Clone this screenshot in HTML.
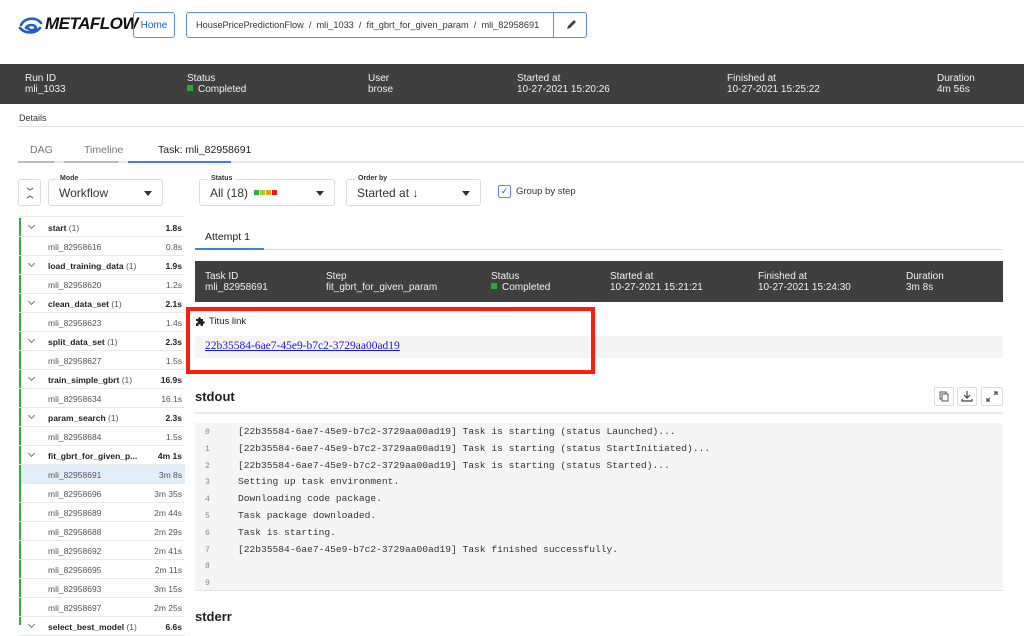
<!DOCTYPE html>
<html><head><meta charset="utf-8"><style>
*{box-sizing:border-box;margin:0;padding:0}
body{width:1024px;height:624px;overflow:hidden;background:#fff;font-family:"Liberation Sans",sans-serif;color:#333;position:relative;font-size:11px}
.a{position:absolute;white-space:nowrap}
.bar{position:absolute;background:#3f3f3f;color:#fff}
.bar .l{position:absolute;font-size:10px;line-height:11px;color:#f0f0f0}
.bar .l span{display:block;font-weight:normal}
.dot{display:inline-block;width:6px;height:6px;background:#20af2e;margin-right:5px;vertical-align:1px}
.sel{position:absolute;top:179px;height:27px;border:1px solid #ddd;border-radius:3px;background:#fff}
.sel b{position:absolute;top:-5px;left:8px;font-size:7px;background:#fff;padding:0 3px;color:#333}
.sel .v{position:absolute;left:10px;top:6px;font-size:12px;color:#333}
.sel .c{position:absolute;right:10px;top:11px;border-left:4px solid transparent;border-right:4px solid transparent;border-top:5px solid #333}
.sq{display:inline-block;width:5px;height:5px;margin-right:1px;vertical-align:2px}
.row{position:absolute;left:19px;width:166px;height:19px;border-bottom:1px solid #e8e8e8;font-size:8.5px;color:#555}
.row .n{position:absolute;left:29px;top:5px}
.row .t{position:absolute;right:3px;top:5px}
.row.h{font-weight:bold;color:#222}
.row.h .n span{font-weight:normal;color:#555}
.row.h:before{content:"";position:absolute;left:10px;top:5px;width:4px;height:4px;border-right:1px solid #777;border-bottom:1px solid #777;transform:rotate(45deg)}
.g{position:absolute;left:19px;width:2px;background:#2bb03f}
.log{position:absolute;font-family:"Liberation Mono",monospace;font-size:9.6px;color:#333}
.ib{position:absolute;top:387px;width:20px;height:19px;border:1px solid #ddd;border-radius:2px;background:#fff}
</style></head><body>
<svg class="a" style="left:18px;top:15px" width="26" height="20" viewBox="0 0 26 20"><path d="M3 10c4-8 16-8 20-2M2 13c5 6 15 6 20 0M8 13c2-4 9-4 10 0c-2 3-7 3-9-1" fill="none" stroke="#1a5fc8" stroke-width="2.6" stroke-linecap="round"/></svg>
<div class="a" style="left:45px;top:14px;font-size:17px;font-weight:bold;font-style:italic;color:#111;letter-spacing:-0.5px">METAFLOW</div>
<div class="a" style="left:133px;top:12px;width:42px;height:26px;border:1px solid #5b8fd9;border-radius:3px;color:#1a63c8;font-size:10px;text-align:center;padding-top:7px;line-height:11px">Home</div>
<div class="a" style="left:186px;top:12px;width:401px;height:26px;border:1px solid #5b8fd9;border-radius:3px;font-size:9.2px;line-height:11px;padding:7px 0 0 9px;color:#333">HousePricePredictionFlow &nbsp;/&nbsp; mli_1033 &nbsp;/&nbsp; fit_gbrt_for_given_param &nbsp;/&nbsp; mli_82958691</div>
<div class="a" style="left:553px;top:13px;width:33px;height:24px;background:#fff;border-left:1px solid #5b8fd9;border-radius:0 3px 3px 0"></div>
<svg class="a" style="left:566px;top:18px" width="12" height="12" viewBox="0 0 12 12"><path d="M1 11l1-3 6-6 2 2-6 6z" fill="#444"/></svg>

<div class="bar" style="left:0;top:64px;width:1024px;height:40px">
<div class="l" style="left:25px;top:9px">Run ID<span>mli_1033</span></div>
<div class="l" style="left:187px;top:9px">Status<span><i class="dot"></i>Completed</span></div>
<div class="l" style="left:368px;top:9px">User<span>brose</span></div>
<div class="l" style="left:517px;top:9px">Started at<span>10-27-2021 15:20:26</span></div>
<div class="l" style="left:727px;top:9px">Finished at<span>10-27-2021 15:25:22</span></div>
<div class="l" style="left:937px;top:9px">Duration<span>4m 56s</span></div>
</div>
<div class="a" style="left:19px;top:113px;font-size:9px">Details</div>
<div class="a" style="left:19px;top:126px;width:1005px;height:1px;background:#e5e5e5"></div>
<div class="a" style="left:30px;top:144px;font-size:10.5px;color:#777">DAG</div>
<div class="a" style="left:84px;top:144px;font-size:10.5px;color:#777">Timeline</div>
<div class="a" style="left:158px;top:144px;font-size:10.5px;color:#222">Task: mli_82958691</div>
<div class="a" style="left:18px;top:161px;width:1006px;height:2px;background:#e8e8e8"></div>
<div class="a" style="left:18px;top:161px;width:36px;height:2px;background:#bbb"></div>
<div class="a" style="left:64px;top:161px;width:54px;height:2px;background:#bbb"></div>
<div class="a" style="left:128px;top:161px;width:103px;height:2px;background:#3b82d8"></div>

<div class="sel" style="left:18px;width:23px"><svg class="a" style="left:6px;top:6px" width="10" height="14" viewBox="0 0 10 14"><path d="M2 2l3 2 3-2M2 12l3-2 3 2" fill="none" stroke="#555" stroke-width="1"/></svg></div>
<div class="sel" style="left:48px;width:115px"><b>Mode</b><div class="v">Workflow</div><div class="c"></div></div>
<div class="sel" style="left:199px;width:136px"><b>Status</b><div class="v">All (18) <i class="sq" style="background:#2bb03f;margin-left:3px"></i><i class="sq" style="background:#a5d12b"></i><i class="sq" style="background:#e8a21a"></i><i class="sq" style="background:#e02020"></i></div><div class="c"></div></div>
<div class="sel" style="left:346px;width:135px"><b>Order by</b><div class="v">Started at ↓</div><div class="c"></div></div>
<div class="a" style="left:498px;top:185px;width:13px;height:13px;border:1px solid #5b8fd9;border-radius:2px;color:#1a63c8;font-size:9px;text-align:center;line-height:11px">✓</div>
<div class="a" style="left:516px;top:186px;font-size:9.5px">Group by step</div>

<div class="a" style="left:19px;top:216px;width:166px;height:1px;background:#e8e8e8"></div>
<div class="g" style="top:218px;height:37px"></div>
<div class="g" style="top:256px;height:37px"></div>
<div class="g" style="top:294px;height:37px"></div>
<div class="g" style="top:332px;height:37px"></div>
<div class="g" style="top:370px;height:37px"></div>
<div class="g" style="top:408px;height:37px"></div>
<div class="g" style="top:446px;height:170px"></div>
<div class="g" style="top:617px;height:8px"></div>
<div class="row h" style="top:218px"><div class="n">start <span>(1)</span></div><div class="t">1.8s</div></div>
<div class="row" style="top:237px"><div class="n">mli_82958616</div><div class="t">0.8s</div></div>
<div class="row h" style="top:256px"><div class="n">load_training_data <span>(1)</span></div><div class="t">1.9s</div></div>
<div class="row" style="top:275px"><div class="n">mli_82958620</div><div class="t">1.2s</div></div>
<div class="row h" style="top:294px"><div class="n">clean_data_set <span>(1)</span></div><div class="t">2.1s</div></div>
<div class="row" style="top:313px"><div class="n">mli_82958623</div><div class="t">1.4s</div></div>
<div class="row h" style="top:332px"><div class="n">split_data_set <span>(1)</span></div><div class="t">2.3s</div></div>
<div class="row" style="top:351px"><div class="n">mli_82958627</div><div class="t">1.5s</div></div>
<div class="row h" style="top:370px"><div class="n">train_simple_gbrt <span>(1)</span></div><div class="t">16.9s</div></div>
<div class="row" style="top:389px"><div class="n">mli_82958634</div><div class="t">16.1s</div></div>
<div class="row h" style="top:408px"><div class="n">param_search <span>(1)</span></div><div class="t">2.3s</div></div>
<div class="row" style="top:427px"><div class="n">mli_82958684</div><div class="t">1.5s</div></div>
<div class="row h" style="top:446px"><div class="n">fit_gbrt_for_given_p...</div><div class="t">4m 1s</div></div>
<div class="row" style="top:465px;background:#e3eefb;left:21px;width:164px"><div class="n" style="left:27px">mli_82958691</div><div class="t">3m 8s</div></div>
<div class="row" style="top:484px"><div class="n">mli_82958696</div><div class="t">3m 35s</div></div>
<div class="row" style="top:503px"><div class="n">mli_82958689</div><div class="t">2m 44s</div></div>
<div class="row" style="top:522px"><div class="n">mli_82958688</div><div class="t">2m 29s</div></div>
<div class="row" style="top:541px"><div class="n">mli_82958692</div><div class="t">2m 41s</div></div>
<div class="row" style="top:560px"><div class="n">mli_82958695</div><div class="t">2m 11s</div></div>
<div class="row" style="top:579px"><div class="n">mli_82958693</div><div class="t">3m 15s</div></div>
<div class="row" style="top:598px"><div class="n">mli_82958697</div><div class="t">2m 25s</div></div>
<div class="row h" style="top:617px"><div class="n">select_best_model <span>(1)</span></div><div class="t">6.6s</div></div>

<div class="a" style="left:205px;top:231px;font-size:10.5px;color:#222">Attempt 1</div>
<div class="a" style="left:195px;top:249px;width:808px;height:1px;background:#ddd"></div>
<div class="a" style="left:195px;top:248px;width:69px;height:2px;background:#3b82d8"></div>
<div class="bar" style="left:195px;top:261px;width:808px;height:41px">
<div class="l" style="left:10px;top:10px">Task ID<span>mli_82958691</span></div>
<div class="l" style="left:131px;top:10px">Step<span>fit_gbrt_for_given_param</span></div>
<div class="l" style="left:296px;top:10px">Status<span><i class="dot"></i>Completed</span></div>
<div class="l" style="left:415px;top:10px">Started at<span>10-27-2021 15:21:21</span></div>
<div class="l" style="left:563px;top:10px">Finished at<span>10-27-2021 15:24:30</span></div>
<div class="l" style="left:711px;top:10px">Duration<span>3m 8s</span></div>
</div>
<div class="a" style="left:195px;top:336px;width:808px;height:22px;background:#f5f5f5"></div>
<div class="a" style="left:205px;top:340px;font-family:'Liberation Serif',serif;font-size:11.5px;color:#1a1adc;text-decoration:underline">22b35584-6ae7-45e9-b7c2-3729aa00ad19</div>
<svg class="a" style="left:195px;top:316px" width="10" height="10" viewBox="0 0 10 10"><path d="M1 3h2.5a1.2 1.2 0 1 1 2 0H8v2.5a1.2 1.2 0 1 1 0 2V10H5.5a1.2 1.2 0 1 0-2 0H1V7a1.2 1.2 0 1 0 0-2z" fill="#222"/></svg>
<div class="a" style="left:209px;top:316px;font-size:9.5px;color:#222">Titus link</div>
<div class="a" style="left:186px;top:307px;width:409px;height:67px;border:4px solid #fa1e0e"></div>

<div class="a" style="left:195px;top:389px;font-size:13px;font-weight:bold;color:#222">stdout</div>
<div class="ib" style="left:934px"><svg width="18" height="17" viewBox="0 0 18 17"><rect x="5" y="4" width="6" height="7" fill="none" stroke="#555"/><rect x="7" y="6" width="6" height="7" fill="#fff" stroke="#555"/></svg></div>
<div class="ib" style="left:957px"><svg width="18" height="17" viewBox="0 0 18 17"><path d="M9 3v7M6 7l3 3 3-3M4 11v2h10v-2" fill="none" stroke="#444" stroke-width="1.2"/></svg></div>
<div class="ib" style="left:981px;width:22px"><svg width="20" height="17" viewBox="0 0 20 17"><path d="M8 10l-3 3M5 10v3h3M12 7l3-3M12 4h3v3" fill="none" stroke="#444" stroke-width="1.2"/></svg></div>
<div class="a" style="left:195px;top:412px;width:808px;height:2px;background:#eaeaea"></div>
<div class="a" style="left:195px;top:423px;width:808px;height:168px;background:#f5f5f5;border-bottom:1px solid #e3e3e3"></div>
<div class="log" style="left:205px;top:425px;font-size:8px;color:#888;line-height:16.8px">0<br>1<br>2<br>3<br>4<br>5<br>6<br>7<br>8<br>9</div>
<div class="log" style="left:238px;top:424px;line-height:16.8px">[22b35584-6ae7-45e9-b7c2-3729aa00ad19] Task is starting (status Launched)...<br>[22b35584-6ae7-45e9-b7c2-3729aa00ad19] Task is starting (status StartInitiated)...<br>[22b35584-6ae7-45e9-b7c2-3729aa00ad19] Task is starting (status Started)...<br>Setting up task environment.<br>Downloading code package.<br>Task package downloaded.<br>Task is starting.<br>[22b35584-6ae7-45e9-b7c2-3729aa00ad19] Task finished successfully.</div>
<div class="a" style="left:195px;top:609px;font-size:13px;font-weight:bold;color:#222">stderr</div>
</body></html>
